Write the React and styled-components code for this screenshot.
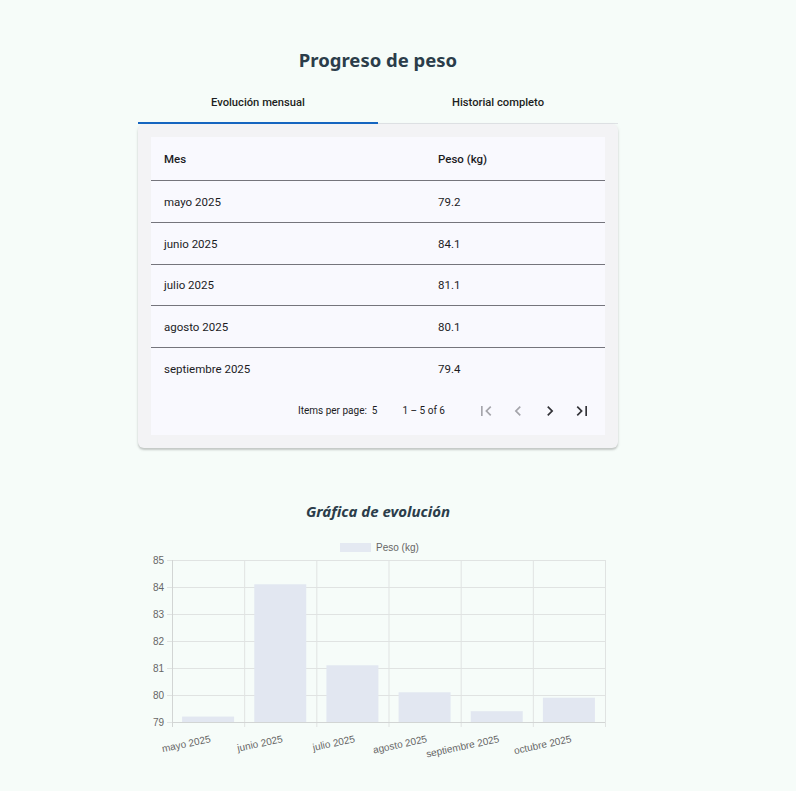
import React from "react";
import styled, { createGlobalStyle } from "styled-components";

const GlobalStyle = createGlobalStyle`
  body {
    margin: 0;
    background: #f6fcf9;
    font-family: Roboto, "Liberation Sans", sans-serif;
  }
`;

const Page = styled.div`
  width: 480px;
  margin-left: 138px;
  padding-top: 46px;
  padding-bottom: 30px;
`;

const Title = styled.h2`
  margin: 0;
  text-align: center;
  font-family: "Noto Sans", "Open Sans", sans-serif;
  font-weight: 700;
  font-size: 18.5px;
  line-height: 28px;
  color: #2b3d4a;
`;

const Tabs = styled.div`
  display: flex;
  margin-top: 8px;
  border-bottom: 1px solid #e0e3e6;
`;

const Tab = styled.div`
  flex: 1;
  height: 40px;
  display: flex;
  align-items: center;
  justify-content: center;
  font-size: 11.2px;
  font-weight: 500;
  color: #1d1f22;
  margin-bottom: -1px;
  border-bottom: 2px solid ${(p) => (p.$active ? "#1565c0" : "transparent")};
`;

const Card = styled.div`
  background: #f3f3f5;
  padding: 13px;
  border-radius: 6px;
  box-shadow: 0 2px 2px rgba(0, 0, 0, 0.18), 0 1px 4px rgba(0, 0, 0, 0.06);
`;

const Table = styled.div`
  background: #f9f9fe;
`;

const Row = styled.div`
  display: grid;
  grid-template-columns: 274px 1fr;
  align-items: center;
  height: ${(p) => p.$h}px;
  padding-left: 13px;
  font-size: 11.5px;
  font-weight: ${(p) => (p.$head ? 500 : 400)};
  color: #1c1c1f;
  border-bottom: ${(p) => (p.$last ? "none" : "1px solid #75757c")};
  box-sizing: border-box;
`;

const Pager = styled.div`
  display: flex;
  align-items: center;
  justify-content: flex-end;
  height: 45px;
  padding: 0 7px 4px 0;
  box-sizing: border-box;
  font-size: 10px;
  color: #1c1c1f;
`;

const PagerText = styled.span`
  margin-right: 25px;
`;

const IconButton = styled.span`
  width: 32px;
  height: 32px;
  display: flex;
  align-items: center;
  justify-content: center;
  color: ${(p) => (p.$disabled ? "#a5a5ab" : "#333338")};
`;

const ChartTitle = styled.h3`
  margin: 52px 0 0;
  text-align: center;
  font-family: "Noto Sans", "Open Sans", sans-serif;
  font-style: italic;
  font-weight: 700;
  font-size: 15px;
  line-height: 22px;
  color: #2b3d4a;
`;

const ChartBox = styled.svg`
  display: block;
  margin-top: 13px;
`;

const rows = [
  ["mayo 2025", "79.2", 42],
  ["junio 2025", "84.1", 42],
  ["julio 2025", "81.1", 41],
  ["agosto 2025", "80.1", 42],
  ["septiembre 2025", "79.4", 42],
];

const chartData = [
  ["mayo 2025", 79.2],
  ["junio 2025", 84.1],
  ["julio 2025", 81.1],
  ["agosto 2025", 80.1],
  ["septiembre 2025", 79.4],
  ["octubre 2025", 79.9],
];

const Icon = ({ d }) => (
  <svg width="20" height="20" viewBox="0 0 24 24" fill="currentColor">
    <path d={d} />
  </svg>
);

function Chart() {
  const left = 34;
  const right = 467;
  const top = 25;
  const bottom = 187;
  const unit = (bottom - top) / 6;
  const cat = (right - left) / 6;
  const grid = "#e0e3e2";
  const label = "#666";
  return (
    <ChartBox width="480" height="232" viewBox="0 0 480 232">
      <rect x="202" y="8" width="31" height="9" fill="#e4e9f2" />
      <text x="238" y="16" fontSize="10" fill={label} fontFamily="Liberation Sans, sans-serif">
        Peso (kg)
      </text>
      {[85, 84, 83, 82, 81, 80, 79].map((v, i) => (
        <g key={v}>
          <line x1={left - 5} x2={right} y1={top + i * unit + 0.5} y2={top + i * unit + 0.5} stroke={grid} />
          <text x={left - 8} y={top + i * unit + 3.5} fontSize="10" fill={label} textAnchor="end" fontFamily="Liberation Sans, sans-serif">
            {v}
          </text>
        </g>
      ))}
      {[0, 1, 2, 3, 4, 5, 6].map((i) => (
        <line key={i} x1={left + i * cat + 0.5} x2={left + i * cat + 0.5} y1={top} y2={bottom + 5} stroke={i === 0 ? "#d2d5d4" : grid} />
      ))}
      <line x1={left} x2={right} y1={bottom + 0.5} y2={bottom + 0.5} stroke="#d2d5d4" />
      {chartData.map(([name, v], i) => {
        const h = (v - 79) * unit;
        const cx = left + cat * (i + 0.5);
        return (
          <g key={name}>
            <rect x={cx - 26} y={bottom - h} width="52" height={h} fill="#e2e7f1" />
            <text
              x={cx + 3}
              y={bottom + 20}
              fontSize="10"
              fill={label}
              textAnchor="end"
              fontFamily="Liberation Sans, sans-serif"
              transform={`rotate(-12 ${cx + 3} ${bottom + 20})`}
            >
              {name}
            </text>
          </g>
        );
      })}
    </ChartBox>
  );
}

export default function App() {
  return (
    <>
      <GlobalStyle />
      <Page>
        <Title>Progreso de peso</Title>
        <Tabs>
          <Tab $active>Evolución mensual</Tab>
          <Tab>Historial completo</Tab>
        </Tabs>
        <Card>
          <Table>
            <Row $head $h={44}>
              <span>Mes</span>
              <span>Peso (kg)</span>
            </Row>
            {rows.map(([m, p, h], i) => (
              <Row key={m} $last={i === rows.length - 1} $h={h}>
                <span>{m}</span>
                <span>{p}</span>
              </Row>
            ))}
            <Pager>
              <PagerText>Items per page:&nbsp; 5</PagerText>
              <PagerText>1 – 5 of 6</PagerText>
              <IconButton $disabled>
                <Icon d="M18.41 16.59L13.82 12l4.59-4.59L17 6l-6 6 6 6zM6 6h2v12H6z" />
              </IconButton>
              <IconButton $disabled>
                <Icon d="M15.41 7.41L14 6l-6 6 6 6 1.41-1.41L10.83 12z" />
              </IconButton>
              <IconButton>
                <Icon d="M10 6L8.59 7.41 13.17 12l-4.58 4.59L10 18l6-6z" />
              </IconButton>
              <IconButton>
                <Icon d="M5.59 7.41L10.18 12l-4.59 4.59L7 18l6-6-6-6zM16 6h2v12h-2z" />
              </IconButton>
            </Pager>
          </Table>
        </Card>
        <ChartTitle>Gráfica de evolución</ChartTitle>
        <Chart />
      </Page>
    </>
  );
}
